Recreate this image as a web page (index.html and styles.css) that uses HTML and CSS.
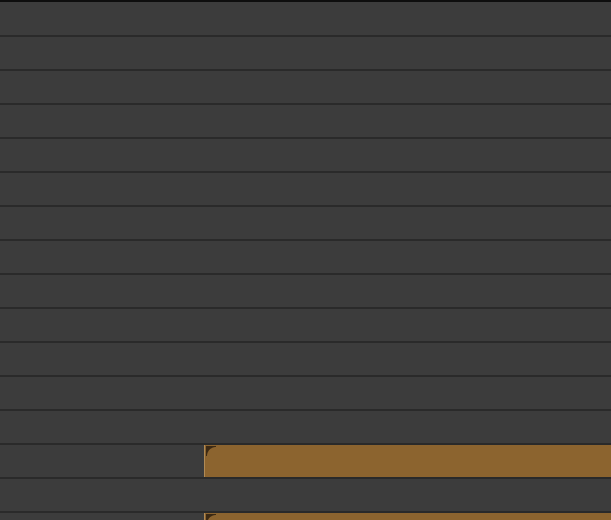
FILE: index.html
```html
<!DOCTYPE html>
<html>
<head>
<meta charset="utf-8">
<link rel="stylesheet" href="styles.css">
</head>
<body>
<div class="tracks">
  <div class="row"></div>
  <div class="row"></div>
  <div class="row"></div>
  <div class="row"></div>
  <div class="row"></div>
  <div class="row"></div>
  <div class="row"></div>
  <div class="row"></div>
  <div class="row"></div>
  <div class="row"></div>
  <div class="row"></div>
  <div class="row"></div>
  <div class="row"></div>
  <div class="row"><div class="clip"><span class="corner"></span></div></div>
  <div class="row"></div>
  <div class="row"><div class="clip"><span class="corner"></span></div></div>
</div>
</body>
</html>
```
FILE: styles.css
```css
html, body {
  margin: 0;
  padding: 0;
  background: #3c3c3c;
  overflow: hidden;
  height: 520px;
}
.tracks {
  border-top: 2px solid #0e0e0e;
  display: flex;
  flex-direction: column;
}
.row {
  height: 32px;
  flex: none;
  border-bottom: 2px solid #2a2a2a;
  display: flex;
  padding-left: 204px;
}
.row:first-child {
  height: 33px;
}
.clip {
  flex: 1;
  position: relative;
  background: #8c642f;
  border-left: 1px solid #b08a55;
}
.corner {
  position: absolute;
  left: 1px;
  top: 1px;
  width: 10px;
  height: 10px;
  background: radial-gradient(circle at 100% 100%, transparent 8.5px, #3b2914 9.5px);
}
```
